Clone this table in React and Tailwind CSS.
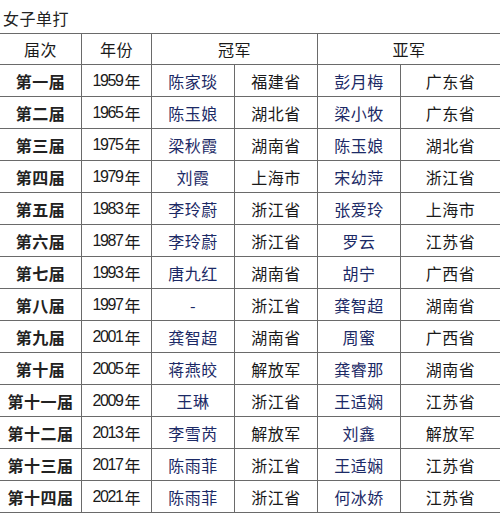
import React from "react";

const rows = [
  ["第一届", "1959年", "陈家琰", "福建省", "彭月梅", "广东省"],
  ["第二届", "1965年", "陈玉娘", "湖北省", "梁小牧", "广东省"],
  ["第三届", "1975年", "梁秋霞", "湖南省", "陈玉娘", "湖北省"],
  ["第四届", "1979年", "刘霞", "上海市", "宋幼萍", "浙江省"],
  ["第五届", "1983年", "李玲蔚", "浙江省", "张爱玲", "上海市"],
  ["第六届", "1987年", "李玲蔚", "浙江省", "罗云", "江苏省"],
  ["第七届", "1993年", "唐九红", "湖南省", "胡宁", "广西省"],
  ["第八届", "1997年", "-", "浙江省", "龚智超", "湖南省"],
  ["第九届", "2001年", "龚智超", "湖南省", "周蜜", "广西省"],
  ["第十届", "2005年", "蒋燕皎", "解放军", "龚睿那", "湖南省"],
  ["第十一届", "2009年", "王琳", "浙江省", "王适娴", "江苏省"],
  ["第十二届", "2013年", "李雪芮", "解放军", "刘鑫", "解放军"],
  ["第十三届", "2017年", "陈雨菲", "浙江省", "王适娴", "江苏省"],
  ["第十四届", "2021年", "陈雨菲", "浙江省", "何冰娇", "江苏省"],
];

const font = { fontFamily: '"Noto Sans CJK SC", "Noto Sans", sans-serif' };

function Year({ text }) {
  const digits = text.slice(0, 4);
  return (
    <span className="flex items-center">
      <span className="text-[16px] leading-none tracking-[-1.4px] pr-[2px] [font-family:'Liberation_Sans',sans-serif] text-[#1a1a1a]">
        {digits}
      </span>
      <span className="text-[16px] leading-none text-[#1a1a1a]">年</span>
    </span>
  );
}

export default function App() {
  const cell = "flex items-center justify-center border-b border-r border-[#6a6a6a]";
  return (
    <div className="w-[500px] h-[515px] bg-white overflow-hidden" style={font}>
      <div className="h-[33px] flex items-center pl-[3px] pt-[2px] text-[16px] tracking-[0.5px] text-[#222]">
        女子单打
      </div>
      <div className="grid grid-cols-[82px_70px_83px_83px_83px_99px] border-t border-[#6a6a6a] text-[16px]">
        <div className={`${cell} h-[31px] text-[#1a1a1a] tracking-[0.5px]`}>届次</div>
        <div className={`${cell} h-[31px] text-[#1a1a1a] tracking-[0.5px]`}>年份</div>
        <div className={`${cell} col-span-2 h-[31px] text-[#1a1a1a] tracking-[0.5px]`}>冠军</div>
        <div className={`${cell} col-span-2 h-[31px] text-[#1a1a1a] tracking-[0.5px] border-r-0`}>亚军</div>
        {rows.map((r, i) => (
          <React.Fragment key={i}>
            <div className={`${cell} h-[32px] font-bold text-[#222] tracking-[0.5px]`}>{r[0]}</div>
            <div className={`${cell} h-[32px]`}>
              <Year text={r[1]} />
            </div>
            <div className={`${cell} h-[32px] text-[#1c2a66] tracking-[0.5px]`}>{r[2]}</div>
            <div className={`${cell} h-[32px] text-[#1a1a1a] tracking-[0.5px]`}>{r[3]}</div>
            <div className={`${cell} h-[32px] text-[#1c2a66] tracking-[0.5px]`}>{r[4]}</div>
            <div className={`${cell} h-[32px] text-[#1a1a1a] border-r-0 tracking-[0.5px]`}>{r[5]}</div>
          </React.Fragment>
        ))}
      </div>
    </div>
  );
}
